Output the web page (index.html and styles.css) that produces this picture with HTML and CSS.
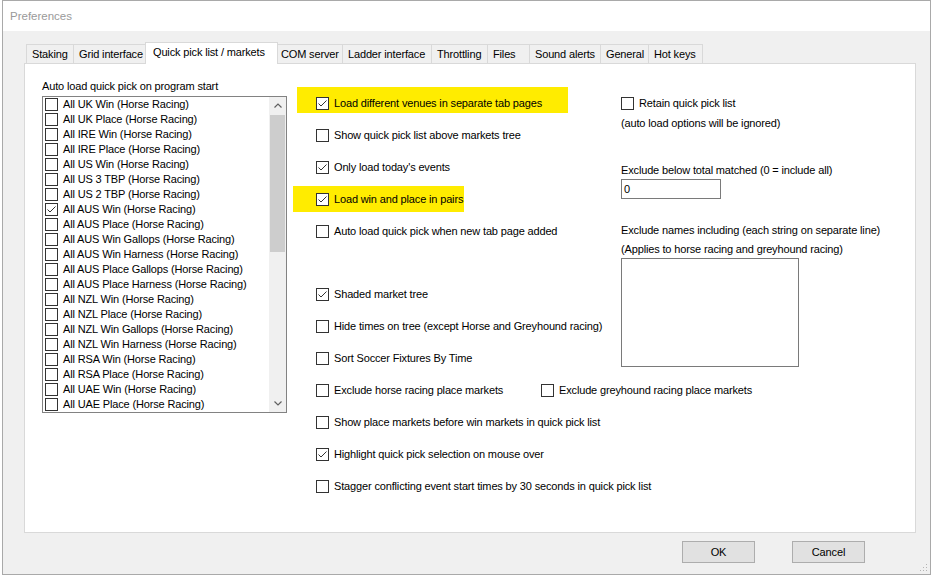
FILE: index.html
```html
<!DOCTYPE html>
<html>
<head>
<meta charset="utf-8">
<link rel="stylesheet" href="styles.css">
</head>
<body>
<div class="window">
  <div class="titlebar"><span class="title">Preferences</span></div>
  <div class="client">
    <div class="tabs">
      <div class="tab w-staking">Staking</div>
      <div class="tab w-grid">Grid interface</div>
      <div class="tab active w-quick">Quick pick list / markets</div>
      <div class="tab w-com">COM server</div>
      <div class="tab w-ladder">Ladder interface</div>
      <div class="tab w-throttle">Throttling</div>
      <div class="tab w-files">Files</div>
      <div class="tab w-sound">Sound alerts</div>
      <div class="tab w-general">General</div>
      <div class="tab last w-hot">Hot keys</div>
    </div>
    <div class="page">
      <div class="col-left">
        <div class="label">Auto load quick pick on program start</div>
        <div class="listbox">
          <div class="items">
            <div class="item"><span class="cb"></span><span>All UK Win (Horse Racing)</span></div>
            <div class="item"><span class="cb"></span><span>All UK Place (Horse Racing)</span></div>
            <div class="item"><span class="cb"></span><span>All IRE Win (Horse Racing)</span></div>
            <div class="item"><span class="cb"></span><span>All IRE Place (Horse Racing)</span></div>
            <div class="item"><span class="cb"></span><span>All US Win (Horse Racing)</span></div>
            <div class="item"><span class="cb"></span><span>All US 3 TBP (Horse Racing)</span></div>
            <div class="item"><span class="cb"></span><span>All US 2 TBP (Horse Racing)</span></div>
            <div class="item"><span class="cb"><svg viewBox="0 0 11 11" width="11" height="11"><polyline points="1.5,5.5 4,8 9.5,2.5" fill="none" stroke="#333" stroke-width="1"/></svg></span><span>All AUS Win (Horse Racing)</span></div>
            <div class="item"><span class="cb"></span><span>All AUS Place (Horse Racing)</span></div>
            <div class="item"><span class="cb"></span><span>All AUS Win Gallops (Horse Racing)</span></div>
            <div class="item"><span class="cb"></span><span>All AUS Win Harness (Horse Racing)</span></div>
            <div class="item"><span class="cb"></span><span>All AUS Place Gallops (Horse Racing)</span></div>
            <div class="item"><span class="cb"></span><span>All AUS Place Harness (Horse Racing)</span></div>
            <div class="item"><span class="cb"></span><span>All NZL Win (Horse Racing)</span></div>
            <div class="item"><span class="cb"></span><span>All NZL Place (Horse Racing)</span></div>
            <div class="item"><span class="cb"></span><span>All NZL Win Gallops (Horse Racing)</span></div>
            <div class="item"><span class="cb"></span><span>All NZL Win Harness (Horse Racing)</span></div>
            <div class="item"><span class="cb"></span><span>All RSA Win (Horse Racing)</span></div>
            <div class="item"><span class="cb"></span><span>All RSA Place (Horse Racing)</span></div>
            <div class="item"><span class="cb"></span><span>All UAE Win (Horse Racing)</span></div>
            <div class="item"><span class="cb"></span><span>All UAE Place (Horse Racing)</span></div>
          </div>
          <div class="vscroll">
            <div class="sarrow"><svg viewBox="0 0 8 5" width="8" height="5"><polyline points="0.5,4.5 4,1 7.5,4.5" fill="none" stroke="#606060" stroke-width="1.2"/></svg></div>
            <div class="track"><div class="thumb"></div></div>
            <div class="sarrow"><svg viewBox="0 0 8 5" width="8" height="5"><polyline points="0.5,0.5 4,4 7.5,0.5" fill="none" stroke="#606060" stroke-width="1.2"/></svg></div>
          </div>
        </div>
      </div>

      <div class="col-mid">
        <div class="row"><span class="hl hl-1"></span><span class="cb"><svg viewBox="0 0 11 11" width="11" height="11"><polyline points="1.5,5.5 4,8 9.5,2.5" fill="none" stroke="#333" stroke-width="1"/></svg></span><span class="txt">Load different venues in separate tab pages</span></div>
        <div class="row"><span class="cb"></span><span class="txt">Show quick pick list above markets tree</span></div>
        <div class="row"><span class="cb"><svg viewBox="0 0 11 11" width="11" height="11"><polyline points="1.5,5.5 4,8 9.5,2.5" fill="none" stroke="#333" stroke-width="1"/></svg></span><span class="txt">Only load today's events</span></div>
        <div class="row"><span class="hl hl-2"></span><span class="cb"><svg viewBox="0 0 11 11" width="11" height="11"><polyline points="1.5,5.5 4,8 9.5,2.5" fill="none" stroke="#333" stroke-width="1"/></svg></span><span class="txt">Load win and place in pairs</span></div>
        <div class="row"><span class="cb"></span><span class="txt">Auto load quick pick when new tab page added</span></div>
        <div class="row-gap"></div>
        <div class="row"><span class="cb"><svg viewBox="0 0 11 11" width="11" height="11"><polyline points="1.5,5.5 4,8 9.5,2.5" fill="none" stroke="#333" stroke-width="1"/></svg></span><span class="txt">Shaded market tree</span></div>
        <div class="row"><span class="cb"></span><span class="txt">Hide times on tree (except Horse and Greyhound racing)</span></div>
        <div class="row"><span class="cb"></span><span class="txt">Sort Soccer Fixtures By Time</span></div>
        <div class="row">
          <div class="pair-first"><span class="cb"></span><span class="txt">Exclude horse racing place markets</span></div>
          <span class="cb"></span><span class="txt">Exclude greyhound racing place markets</span>
        </div>
        <div class="row"><span class="cb"></span><span class="txt">Show place markets before win markets in quick pick list</span></div>
        <div class="row"><span class="cb"><svg viewBox="0 0 11 11" width="11" height="11"><polyline points="1.5,5.5 4,8 9.5,2.5" fill="none" stroke="#333" stroke-width="1"/></svg></span><span class="txt">Highlight quick pick selection on mouse over</span></div>
        <div class="row"><span class="cb"></span><span class="txt">Stagger conflicting event start times by 30 seconds in quick pick list</span></div>
      </div>

      <div class="col-right">
        <div class="rrow"><span class="cb"></span><span class="txt">Retain quick pick list</span></div>
        <div class="note">(auto load options will be ignored)</div>
        <div class="flabel">Exclude below total matched (0 = include all)</div>
        <div class="textbox">0</div>
        <div class="flabel2">Exclude names including (each string on separate line)</div>
        <div class="note2">(Applies to horse racing and greyhound racing)</div>
        <div class="textarea"></div>
      </div>
    </div>
    <div class="buttons">
      <div class="btn">OK</div>
      <div class="btn">Cancel</div>
    </div>
  </div>
  <svg class="grip" viewBox="0 0 8 8" width="8" height="8">
    <rect x="6" y="0" width="1" height="1" fill="#b4b4b4"/>
    <rect x="3" y="3" width="1" height="1" fill="#b4b4b4"/>
    <rect x="6" y="3" width="1" height="1" fill="#b4b4b4"/>
    <rect x="0" y="6" width="1" height="1" fill="#b4b4b4"/>
    <rect x="3" y="6" width="1" height="1" fill="#b4b4b4"/>
    <rect x="6" y="6" width="1" height="1" fill="#b4b4b4"/>
  </svg>
</div>
</body>
</html>
```

FILE: styles.css
```css
* { box-sizing: border-box; }
html, body { margin: 0; padding: 0; background: #ffffff; }
body {
  font-family: "Liberation Sans", Arial, sans-serif;
  font-size: 11px;
  letter-spacing: -0.15px;
  color: #000;
}
.window {
  position: relative;
  margin-left: 2px;
  width: 929px;
  height: 575px;
  border: 1px solid #a9a9a9;
  background: #f0f0f0;
}
.titlebar {
  height: 30px;
  background: #ffffff;
  padding-left: 7px;
  display: flex;
  align-items: center;
}
.title {
  font-size: 11.5px;
  letter-spacing: 0;
  color: #9a9a9a;
}
.client {
  padding-top: 11px;
}
.tabs {
  display: flex;
  align-items: flex-end;
  height: 21px;
  margin-left: 23px;
}
.tab {
  height: 19px;
  line-height: 18px;
  padding-left: 5px;
  border-top: 1px solid #d9d9d9;
  border-left: 1px solid #d9d9d9;
  background: #f0f0f0;
  white-space: nowrap;
}
.tab.last { border-right: 1px solid #d9d9d9; }
.tab.active {
  position: relative;
  z-index: 2;
  height: 22px;
  line-height: 19px;
  margin-bottom: -1px;
  margin-left: -2px;
  margin-right: -3px;
  padding-left: 7px;
  background: #ffffff;
  border-right: 1px solid #d9d9d9;
}
.w-staking { width: 47px; }
.w-grid { width: 74px; }
.w-quick { width: 133px; }
.w-com { width: 67px; }
.w-ladder { width: 89px; }
.w-throttle { width: 56px; }
.w-files { width: 42px; }
.w-sound { width: 71px; }
.w-general { width: 48px; }
.w-hot { width: 55px; }

.page {
  position: relative;
  z-index: 1;
  margin-left: 21px;
  width: 892px;
  height: 470px;
  border: 1px solid #d9d9d9;
  background: #ffffff;
  display: flex;
  padding-left: 17px;
}
.col-left { padding-top: 15px; width: 245px; flex: none; }
.label { line-height: 14px; height: 14px; margin-bottom: 3px; white-space: nowrap; }
.listbox {
  width: 245px;
  height: 317px;
  border: 1px solid #828282;
  display: flex;
}
.items { flex: 1; }
.item {
  height: 15px;
  line-height: 15px;
  display: flex;
  align-items: center;
  padding-left: 2px;
  white-space: nowrap;
}
.item .cb { margin-right: 5px; }
.cb {
  flex: none;
  width: 13px;
  height: 13px;
  border: 1px solid #333333;
  background: #ffffff;
  display: inline-flex;
}
.cb svg { display: block; }
.vscroll {
  width: 17px;
  background: #f0f0f0;
  display: flex;
  flex-direction: column;
}
.sarrow {
  height: 17px;
  display: flex;
  align-items: center;
  justify-content: center;
}
.track { flex: 1; padding: 1px 1px 0 1px; }
.thumb { height: 137px; background: #cdcdcd; }

.col-mid {
  flex: none;
  margin-left: 29px;
  width: 305px;
  padding-top: 23px;
}
.row {
  position: relative;
  height: 32px;
  display: flex;
  align-items: center;
  white-space: nowrap;
}
.row-gap { height: 31px; }
.row .cb, .rrow .cb { margin-right: 5px; position: relative; }
.txt { position: relative; }
.pair-first { flex: none; width: 225px; display: flex; align-items: center; }
.hl {
  position: absolute;
  background: #ffec00;
}
.hl-1 { left: -19px; top: 0; width: 271px; height: 26px; }
.hl-2 { left: -23px; top: 3px; width: 171px; height: 26px; }

.col-right { padding-top: 32px; white-space: nowrap; }
.rrow { height: 14px; display: flex; align-items: center; line-height: 14px; }
.note { line-height: 14px; margin-top: 6px; }
.flabel { line-height: 14px; margin-top: 33px; }
.textbox {
  margin-top: 2px;
  width: 100px;
  height: 20px;
  border: 1px solid #7a7a7a;
  line-height: 18px;
  padding-left: 2px;
}
.flabel2 { line-height: 14px; margin-top: 24px; }
.note2 { line-height: 14px; margin-top: 5px; }
.textarea {
  margin-top: 2px;
  width: 178px;
  height: 109px;
  border: 1px solid #7a7a7a;
  background: #fff;
}

.buttons {
  display: flex;
  margin-top: 8px;
  padding-left: 679px;
  gap: 37px;
}
.btn {
  width: 73px;
  height: 22px;
  border: 1px solid #adadad;
  background: #e1e1e1;
  text-align: center;
  line-height: 20px;
}
.grip {
  position: absolute;
  right: 2px;
  bottom: 2px;
}
```
